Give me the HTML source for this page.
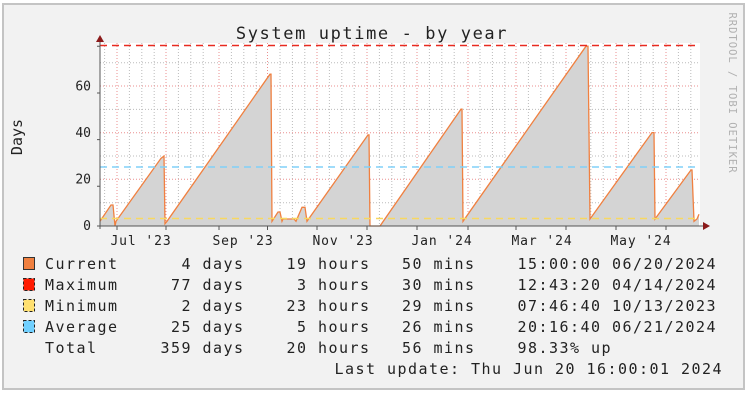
<!DOCTYPE html>
<html><head><meta charset="utf-8"><style>
html,body{margin:0;padding:0;background:#fff;width:748px;height:400px;overflow:hidden}
svg{display:block}
text{font-family:"DejaVu Sans Mono","Liberation Mono",monospace;fill:#222}
</style></head><body>
<svg width="748" height="400" viewBox="0 0 748 400" xmlns="http://www.w3.org/2000/svg">
<rect x="3" y="4" width="741" height="385" fill="#f2f2f2" stroke="#c4c4c4" stroke-width="2"/>
<rect x="100" y="43" width="600" height="183" fill="#fff"/>
<g stroke="#bbbbbb" stroke-width="1" stroke-dasharray="1,2">
<path d="M100 202.7H700M100 156H700M100 109.4H700M100 62.7H700"/>
<path d="M129.4 43V226M141.8 43V226M154.2 43V226M178.4 43V226M190.8 43V226M203.2 43V226M231.4 43V226M243.8 43V226M256.2 43V226M280 43V226M292.4 43V226M304.8 43V226M329.4 43V226M341.8 43V226M354.2 43V226M379.4 43V226M391.8 43V226M404.2 43V226M429.4 43V226M441.8 43V226M454.2 43V226M480 43V226M492.4 43V226M504.8 43V226M528.4 43V226M540.8 43V226M553.2 43V226M578.4 43V226M590.8 43V226M603.2 43V226M628.4 43V226M640.8 43V226M653.2 43V226M678.4 43V226M690.8 43V226M104.6 43V226"/>
</g>
<g stroke="#eb8f8f" stroke-width="1" stroke-dasharray="1,2">
<path d="M100 179.3H700M100 132.7H700M100 86H700"/>
<path d="M117 43V226M166 43V226M219 43V226M267.5 43V226M317 43V226M367 43V226M417 43V226M468 43V226M516 43V226M566 43V226M616 43V226M666 43V226"/>
</g>
<path d="M100 226L100 221.3L111 205L113 205L115 226L116 221.3L161 158.3L164 156L165 223.7L167 221.3L270 74.2L271 74.2L272 221.3L278 212L280 212L282 221.3L283 219L290 219L294 219L296 221.3L302 207.3L305 207.3L307 221.3L368 134.9L369 134.9L370 226L380 226L461 109.2L462 109.2L463 221.3L586 46.2L588 46.2L590 219L652 132.6L654 132.6L655 219L691 170L692 170L694 221.3L697 219L699 214.3L699 226Z" fill="#d4d4d4"/>
<path d="M100 221.3L111 205L113 205L115 226L116 221.3L161 158.3L164 156L165 223.7L167 221.3L270 74.2L271 74.2L272 221.3L278 212L280 212L282 221.3L283 219L290 219L294 219L296 221.3L302 207.3L305 207.3L307 221.3L368 134.9L369 134.9L370 226L380 226L461 109.2L462 109.2L463 221.3L586 46.2L588 46.2L590 219L652 132.6L654 132.6L655 219L691 170L692 170L694 221.3L697 219L699 214.3" fill="none" stroke="#f08040" stroke-width="1.3"/>
<g stroke-width="1.5" stroke-dasharray="7,5" fill="none">
<path d="M100 45.5H700" stroke="#e82a20"/>
<path d="M100 167H700" stroke="#80d0f8"/>
<path d="M100 218.5H700" stroke="#f8d860"/>
</g>
<g stroke="#555" stroke-width="1">
<path d="M100 41V229M97 226H704"/>
<path d="M97 186.3H100M97 139.6H100M97 93H100M97 46.3H100" />
<path d="M117 226V230M166 226V230M219 226V230M267.5 226V230M317 226V230M367 226V230M417 226V230M468 226V230M516 226V230M566 226V230M616 226V230M666 226V230"/>
</g>
<path d="M100 35L96 42H104Z" fill="#8b1a1a"/>
<path d="M710 226L703 222V230Z" fill="#8b1a1a"/>
<text x="372" y="39" text-anchor="middle" font-size="17" letter-spacing="1.6">System uptime - by year</text>
<g font-size="13" text-anchor="end">
<text x="91" y="230">0</text><text x="91" y="183.5">20</text><text x="91" y="137">40</text><text x="91" y="90.5">60</text>
</g>
<g font-size="13" text-anchor="middle" letter-spacing="0.9">
<text x="141" y="245">Jul '23</text><text x="243" y="245">Sep '23</text><text x="343" y="245">Nov '23</text><text x="442" y="245">Jan '24</text><text x="542" y="245">Mar '24</text><text x="641" y="245">May '24</text>
</g>
<text transform="translate(22,137) rotate(-90)" text-anchor="middle" font-size="15">Days</text>
<text transform="translate(729,93) rotate(90)" text-anchor="middle" font-size="10.5" letter-spacing="1" style="fill:#b0b0b0">RRDTOOL / TOBI OETIKER</text>
<rect x="23.5" y="257.5" width="11" height="12" fill="#f08040" stroke="#333"/>
<rect x="23.5" y="278.5" width="11" height="12" fill="#ff1a00" stroke="#222" stroke-dasharray="3,2"/>
<rect x="23.5" y="299.5" width="11" height="12" fill="#ffe070" stroke="#222" stroke-dasharray="3,2"/>
<rect x="23.5" y="320.5" width="11" height="12" fill="#70d0ff" stroke="#222" stroke-dasharray="3,2"/>
<g font-size="15" letter-spacing="1.47" xml:space="preserve">
<text x="45" y="269" xml:space="preserve">Current      4 days    19 hours   50 mins    15:00:00 06/20/2024</text>
<text x="45" y="290" xml:space="preserve">Maximum     77 days     3 hours   30 mins    12:43:20 04/14/2024</text>
<text x="45" y="311" xml:space="preserve">Minimum      2 days    23 hours   29 mins    07:46:40 10/13/2023</text>
<text x="45" y="332" xml:space="preserve">Average     25 days     5 hours   26 mins    20:16:40 06/21/2024</text>
<text x="45" y="353" xml:space="preserve">Total      359 days    20 hours   56 mins    98.33% up</text>
<text x="723" y="374" text-anchor="end" xml:space="preserve">Last update: Thu Jun 20 16:00:01 2024</text>
</g>
</svg>
</body></html>
